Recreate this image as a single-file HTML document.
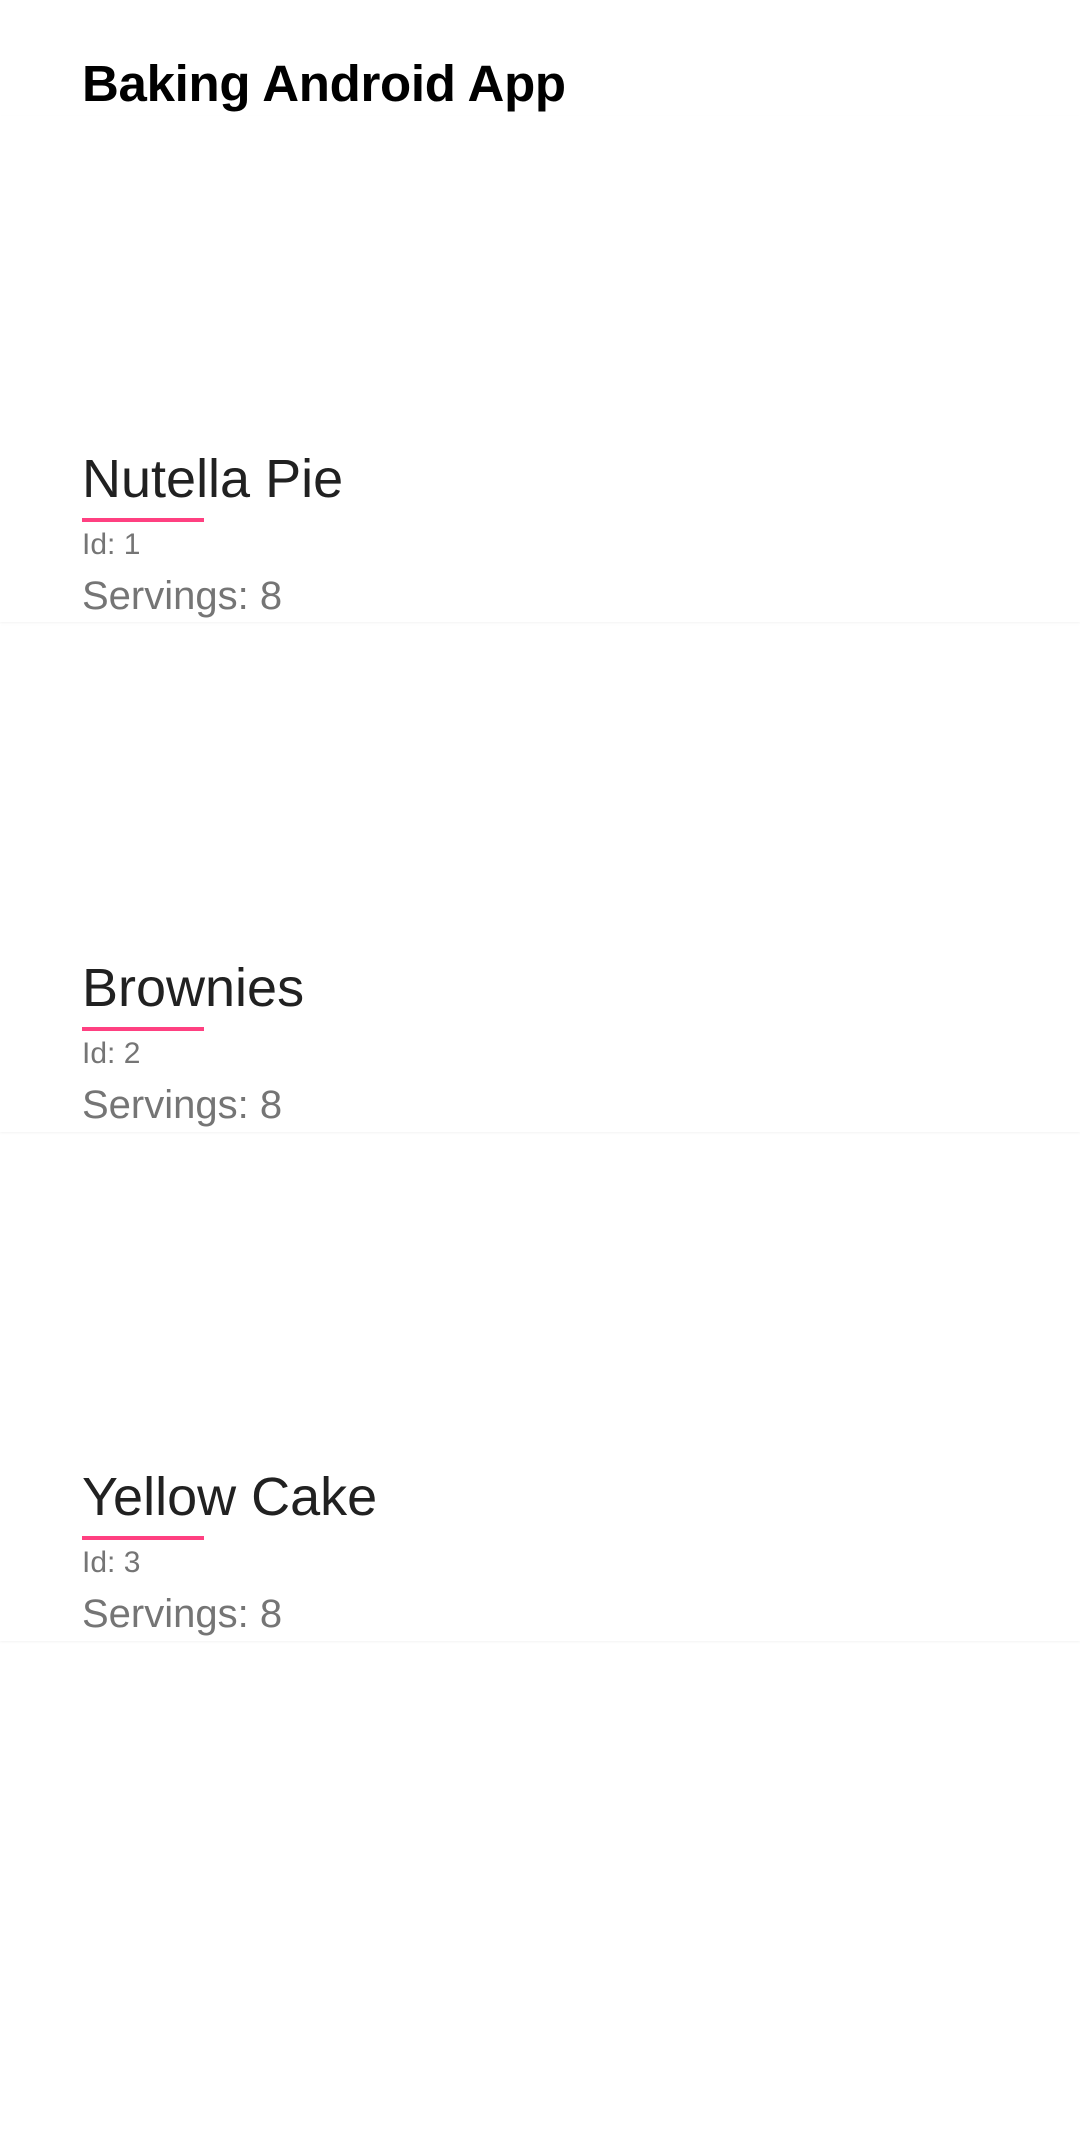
<!DOCTYPE html>
<html><head><meta charset="utf-8"><style>
html,body{margin:0;padding:0;background:#fff;}
body{width:1080px;height:1920px;position:relative;overflow:hidden;font-family:"Liberation Sans","DejaVu Sans",sans-serif;}
.title{position:absolute;left:82px;top:54px;font-size:51px;font-weight:bold;color:#000;line-height:60px;letter-spacing:-0.3px;}
.card{position:absolute;left:0;width:1080px;height:506px;background:#fff;box-shadow:0 1px 2px rgba(0,0,0,0.05);}
.name{position:absolute;left:82px;font-size:54px;color:#212121;line-height:60px;}
.bar{position:absolute;left:82px;width:122px;height:4px;background:#ff4081;}
.id{position:absolute;left:82px;font-size:30px;color:#757575;line-height:32px;}
.serv{position:absolute;left:82px;font-size:40px;color:#757575;line-height:46px;}
</style></head><body>
<div class="card" style="top:116px"></div>
<div class="card" style="top:626px"></div>
<div class="card" style="top:1135px"></div>
<div class="card" style="top:1644px"></div>
<div style="position:absolute;left:0;top:0;width:1080px;height:114px;background:#fff;"></div>
<div class="title">Baking Android App</div>

<div class="name" style="top:449px">Nutella Pie</div>
<div class="bar" style="top:518px"></div>
<div class="id" style="top:529px">Id: 1</div>
<div class="serv" style="top:573px">Servings: 8</div>

<div class="name" style="top:958px">Brownies</div>
<div class="bar" style="top:1027px"></div>
<div class="id" style="top:1038px">Id: 2</div>
<div class="serv" style="top:1082px">Servings: 8</div>

<div class="name" style="top:1467px">Yellow Cake</div>
<div class="bar" style="top:1536px"></div>
<div class="id" style="top:1547px">Id: 3</div>
<div class="serv" style="top:1591px">Servings: 8</div>
</body></html>
